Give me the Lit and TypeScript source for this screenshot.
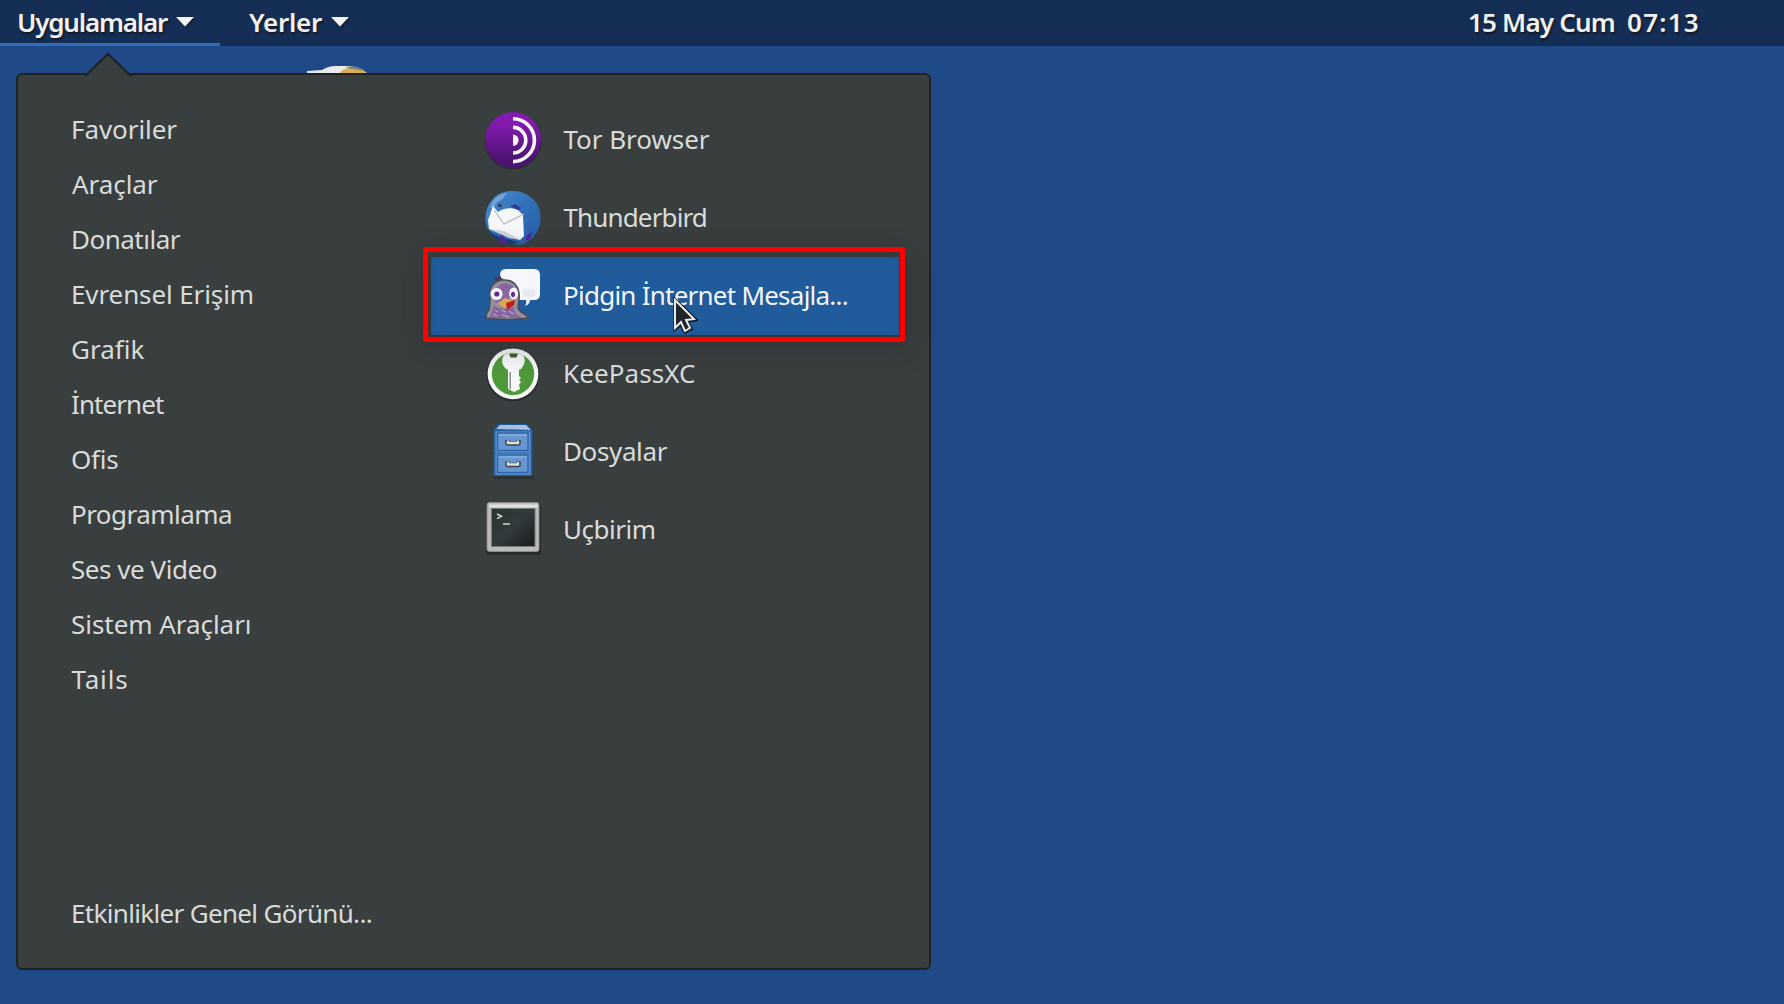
import { LitElement, html, css, svg, TemplateResult } from "lit";
import { customElement, property } from "lit/decorators.js";

/* A text label whose letter spacing is tuned to fill a given width. */
@customElement("fit-label")
export class FitLabel extends LitElement {
  @property() text = "";
  @property({ type: Number }) width = 100;
  static styles = css`
    :host { display: block; white-space: pre; }
    .t { display: inline-block; }
  `;
  render() {
    return html`<span class="t">${this.text}</span>`;
  }
  updated() {
    const el = this.renderRoot.querySelector(".t") as HTMLElement;
    el.style.letterSpacing = "0px";
    const natural = el.getBoundingClientRect().width;
    el.style.letterSpacing = `${(this.width - natural) / this.text.length}px`;
  }
}

const torIcon = svg`<svg viewBox="0 0 58 58">
  <defs><linearGradient id="g" x1="0" y1="0" x2="0" y2="1">
    <stop offset="0.2" stop-color="#831bb0"/><stop offset="0.85" stop-color="#4d1371"/></linearGradient></defs>
  <circle cx="29" cy="30" r="28.5" fill="#26272f" opacity=".7"/>
  <circle cx="29" cy="29" r="28" fill="url(#g)"/>
  <g fill="none" stroke="#f6f5f8" stroke-width="3.6">
    <path d="M29 7.8a21.4 21.4 0 0 1 0 42.8"/>
    <path d="M29 16.4a12.8 12.8 0 0 1 0 25.6"/></g>
  <path d="M29 23.6a5.6 5.6 0 0 1 0 11.2z" fill="#f6f5f8"/>
</svg>`;

const thunderbirdIcon = svg`<svg viewBox="0 0 58 58">
  <defs><linearGradient id="g" x1="0" y1="0" x2="1" y2="1">
    <stop offset="0" stop-color="#4b8cd0"/><stop offset=".5" stop-color="#2f70b8"/><stop offset="1" stop-color="#265ba5"/></linearGradient></defs>
  <path d="M21 3C35-1 50 6 55 19c4 13 0 25-9 32-5 4-11 6-17 4C17 53 5 47 2 35 0 26 3 16 9 10c3-4 7-6 12-7z" fill="url(#g)"/>
  <path d="M6 18c3-9 10-14 18-14-5 3-4 6-9 8-4 2-5 6-5 9z" fill="#72a4da"/>
  <path d="M4 40c5 7 18 10 31 13-4 3-9 3-14 1C13 52 7 47 4 40z" fill="#1c3d75"/>
  <path d="M14 52l4-7 6 10zM42 47l6-4-2 7-4 2z" fill="#55249d"/>
  <path d="M9 17l5 6c5-4 13-5 20-2l5 5 1 21-4 4L5 40 4 31z" fill="#f6f7f9"/>
  <path d="M10 21l10 14 20-10" fill="none" stroke="#b7bbc1" stroke-width="1.2"/>
  <path d="M5 40l15 2 17 9-12-2z" fill="#cfd3da"/>
  <path d="M26 17l5-2 6 4-3 2z" fill="#353b9a"/>
  <circle cx="16" cy="16.5" r="1.8" fill="#32404c"/>
</svg>`;

const pidginIcon = svg`<svg viewBox="0 0 58 58">
  <path d="M22 2h28q6 0 6 6v19q0 6-6 6h-4q0 4-5 6 2-3 1-6H22q-6 0-6-6V8q0-6 6-6z" fill="#f6f7fa"/>
  <path d="M39 22h12v8H39z" fill="#e9eaed"/>
  <path d="M10 11q2 4 6 3l4-2-3-1 0-2-3 1z" fill="#49365c"/>
  <path d="M2 51q0-5 3-8 1-4 1-12C4 20 11 13 20 13c12 0 16 9 15 20-1 7-2 9 2 12q6 3 7 6-21 3-42 0z" fill="#96929d" stroke="#4c4c57" stroke-width="1.6"/>
  <path d="M13 20q7-7 16-1v7l-6 8-12 2zM10 38q8 7 19 2l3 7 6 4H5q3-6 5-13z" fill="#8147a4" opacity=".6"/>
  <path d="M11 43l3 2m-5 2 4 2m4-6 5 2m-4 3 7 2m0-6 5 3" stroke="#bbb5c4" stroke-width="1"/>
  <circle cx="12.6" cy="27" r="6" fill="#f7f7f9"/><ellipse cx="29.6" cy="26.5" rx="4.4" ry="6" fill="#f7f7f9"/>
  <circle cx="12.8" cy="27" r="2.6" fill="#60298a"/><ellipse cx="29" cy="27.5" rx="2" ry="2.8" fill="#60298a"/>
  <path d="M14 36l7-5 6 2 4 2-6 6q-7 0-11-5z" fill="#d6aa55"/>
  <path d="M22 36l9-3-1 5-7 5z" fill="#c8191f"/>
</svg>`;

const keepassIcon = svg`<svg viewBox="0 0 58 58">
  <circle cx="29" cy="30" r="26.6" fill="#282d2d"/>
  <circle cx="29" cy="28.8" r="25.4" fill="#f7f8f8"/>
  <circle cx="29" cy="28.8" r="21.2" fill="#4e9a3b"/>
  <path d="M20 10q9-5 19 0 3 4 1 9-2 5-5 6v6l2 2-2 2 2 2-2 3 1 4-6 3-6-3V25q-5-3-6-8 0-4 2-7z" fill="#f7f8f8"/>
  <path d="M25 8.5h9l-1.500 4h-6z" fill="#3e5c37"/>
  <path d="M26.2 27v17" stroke="#777f78" stroke-width="1.3"/>
</svg>`;

const filesIcon = svg`<svg viewBox="0 0 58 58">
  <rect x="10" y="52" width="40" height="4" fill="#2a3132"/>
  <path d="M9.500 6l5-5h28l6 6v46h-39z" fill="#225899"/>
  <path d="M12 6l4-4h26l5 5z" fill="#a5bfdf"/>
  <path d="M11 8h36v44H11z" fill="#5c8fcd" stroke="#3169ac" stroke-width="1"/>
  <g fill="#6596d2" stroke="#2d63a8" stroke-width="1.3">
    <rect x="13.500" y="10" width="30.5" height="17.5"/><rect x="13.500" y="32" width="30.5" height="17.5"/></g>
  <path d="M11 30h36" stroke="#2d63a8"/>
  <path d="M15 12h28M15 34h28" stroke="#9bbbe0"/>
  <path d="M23.5 17v3.500h11V17M23.5 38.500V42h11v-3.500" fill="none" stroke="#37424f" stroke-width="4.500" stroke-linejoin="round"/>
  <path d="M24 17.5v2.5h10v-2.5M24 39v2.5h10V39" fill="none" stroke="#dededb" stroke-width="2.4"/>
</svg>`;

const terminalIcon = svg`<svg viewBox="0 0 58 58">
  <defs><linearGradient id="g" x1="0" y1="0" x2="1" y2="1">
    <stop offset="0" stop-color="#2c3333"/><stop offset=".5" stop-color="#333a3b"/><stop offset="1" stop-color="#171b1c"/></linearGradient></defs>
  <rect x="2" y="3" width="55" height="51" rx="3" fill="#272c2d"/>
  <rect x="3" y="1.5" width="52" height="49" rx="2.5" fill="#b9bab9" stroke="#8c8e8e"/>
  <path d="M5 3.5h49v3H5z" fill="#e1e1e0"/>
  <rect x="7.500" y="7.5" width="43.5" height="38" fill="url(#g)" stroke="#777a7a"/>
  <path d="M13 13l4.5 2.3-4.5 2.3M19 23h7" fill="none" stroke="#d4d6d4" stroke-width="1.5"/>
</svg>`;

/* One icon per shadow root keeps its gradient ids private. */
@customElement("app-icon")
export class AppIcon extends LitElement {
  @property({ attribute: false }) art: TemplateResult | unknown = null;
  static styles = css`
    :host { display: block; width: 58px; height: 58px; flex: none; }
    svg { display: block; width: 58px; height: 58px; }
  `;
  render() {
    return html`${this.art}`;
  }
}

interface Entry { name: string; width: number; indent: number; }
interface AppEntry extends Entry { icon: unknown; active?: boolean; }

const categories: Entry[] = [
  { name: "Favoriler", width: 106, indent: 1 },
  { name: "Araçlar", width: 85.5, indent: 2 },
  { name: "Donatılar", width: 109, indent: 1 },
  { name: "Evrensel Erişim", width: 183, indent: 1 },
  { name: "Grafik", width: 73.5, indent: 1 },
  { name: "İnternet", width: 92.5, indent: 1 },
  { name: "Ofis", width: 47.5, indent: 1 },
  { name: "Programlama", width: 161, indent: 1 },
  { name: "Ses ve Video", width: 146, indent: 1 },
  { name: "Sistem Araçları", width: 180.5, indent: 1 },
  { name: "Tails", width: 57, indent: 1.5 },
];

const apps: AppEntry[] = [
  { name: "Tor Browser", width: 146, indent: 1.5, icon: torIcon },
  { name: "Thunderbird", width: 143.5, indent: 1.5, icon: thunderbirdIcon },
  { name: "Pidgin İnternet Mesajla...", width: 285, indent: 1, icon: pidginIcon, active: true },
  { name: "KeePassXC", width: 132.5, indent: 1, icon: keepassIcon },
  { name: "Dosyalar", width: 104, indent: 1, icon: filesIcon },
  { name: "Uçbirim", width: 92.5, indent: 1, icon: terminalIcon },
];

@customElement("app-root")
export class AppRoot extends LitElement {
  static styles = css`
    :host {
      display: block; position: relative; width: 1784px; height: 1004px; overflow: hidden;
      background: #204a87; font-family: "Noto Sans", "Open Sans", sans-serif;
      font-size: 26px; line-height: 36px; color: #d9dbda;
    }
    * { box-sizing: border-box; }
    .bar {
      display: flex; height: 46px; background: #152e55; color: #f0f1f2; font-weight: 600;
      text-shadow: 1px 2px 2px #15191e;
    }
    .menu { display: flex; align-items: center; gap: 9px; height: 46px; padding: 0 0 2px 17px; }
    .apps-menu { width: 220px; border-bottom: 3px solid #316cb7; padding-bottom: 0; }
    .places { width: 130px; margin-left: 12px; }
    .caret { width: 18px; height: 10px; flex: none; filter: drop-shadow(1px 1px 1px #15191e); }
    .spacer { flex: 1; }
    .clock { display: flex; align-items: center; gap: 12px; padding: 0 84px 2px 0; }
    .peek { position: absolute; left: 306px; top: 65px; width: 62px; height: 10px; }
    .panel {
      display: flex; width: 915px; height: 897px; margin: 27px 0 0 16px; padding: 28px 0 0;
      background: #393f3f; border: 2px solid #1e2222; border-radius: 6px; position: relative;
    }
    .pointer { position: absolute; left: 66px; top: -23px; width: 48px; height: 25px; }
    .left { display: flex; flex-direction: column; width: 413px; padding-left: 52px; height: 841px; }
    .cat { display: flex; align-items: center; height: 55px; flex: none; padding-bottom: 4px; }
    .overview { margin-top: auto; margin-bottom: 6px; height: 50px; display: flex; align-items: center; }
    .right { display: flex; flex-direction: column; width: 468px; margin-top: -2px; }
    .app { display: flex; align-items: center; gap: 20px; height: 78px; flex: none; padding-left: 53px; }
    .app fit-label { padding-bottom: 2px; }
    .active {
      background: #205b9b; color: #f3f5f8; position: relative; z-index: 1;
      box-shadow: inset 0 0 4px #20508b, 0 6px 24px 10px rgba(25, 29, 27, 0.24);
    }
    .frame { position: absolute; inset: -10px -6px -7px -8px; border: 5px solid #fe0000; border-radius: 2px; }
    .cursor { position: absolute; left: 672px; top: 296px; width: 26px; height: 40px; z-index: 5; }
  `;

  private caret() {
    return html`<svg class="caret" viewBox="0 0 18 10"><path d="M0 0H18L9 9.5z" fill="#f3f4f5"/></svg>`;
  }

  private entry(e: Entry) {
    return html`<fit-label style="margin-left:${e.indent}px" .text=${e.name} .width=${e.width}></fit-label>`;
  }

  render() {
    return html`
      <div class="bar">
        <div class="menu apps-menu"><fit-label .text=${"Uygulamalar"} .width=${150}></fit-label>${this.caret()}</div>
        <div class="menu places"><fit-label .text=${"Yerler"} .width=${73}></fit-label>${this.caret()}</div>
        <div class="spacer"></div>
        <div class="clock">
          <fit-label .text=${"15 May Cum"} .width=${147}></fit-label>
          <fit-label .text=${"07:13"} .width=${73}></fit-label>
        </div>
      </div>
      <svg class="peek" viewBox="0 0 62 10">
        <path d="M1 9V6l15-1Q22 1 30 1h12q12 1 19 7v2z" fill="#e9eaeb"/>
        <path d="M33 9q3-5 10-6h7q8 2 11 6z" fill="#dcae51"/>
        <path d="M39 2q11-2 19 3-9 1-19-3z" fill="#788879"/>
      </svg>
      <div class="panel">
        <svg class="pointer" viewBox="0 0 48 25">
          <path d="M0 25L2 23 24 2 46 23 48 25z" fill="#393f3f"/>
          <path d="M1 24L24 2 47 24" fill="none" stroke="#1e2222" stroke-width="2"/>
        </svg>
        <div class="left">
          ${categories.map((c) => html`<div class="cat">${this.entry(c)}</div>`)}
          <div class="overview">${this.entry({ name: "Etkinlikler Genel Görünü...", width: 301, indent: 1 })}</div>
        </div>
        <div class="right">
          ${apps.map((a) => html`
            <div class="app ${a.active ? "active" : ""}">
              <app-icon .art=${a.icon}></app-icon>${this.entry(a)}
              ${a.active ? html`<div class="frame"></div>` : null}
            </div>`)}
        </div>
      </div>
      <svg class="cursor" viewBox="0 0 26 40">
        <path d="M3 4v29l6-5 4 8 6-3-4-8 9-1z" fill="#20242a" stroke="#182332" stroke-width="3.5"/>
        <path d="M3 4v28l6-6 4 9 5-3-4-8 8-1z" fill="#202427" stroke="#f4f5f6" stroke-width="1.9"/>
      </svg>
    `;
  }
}
